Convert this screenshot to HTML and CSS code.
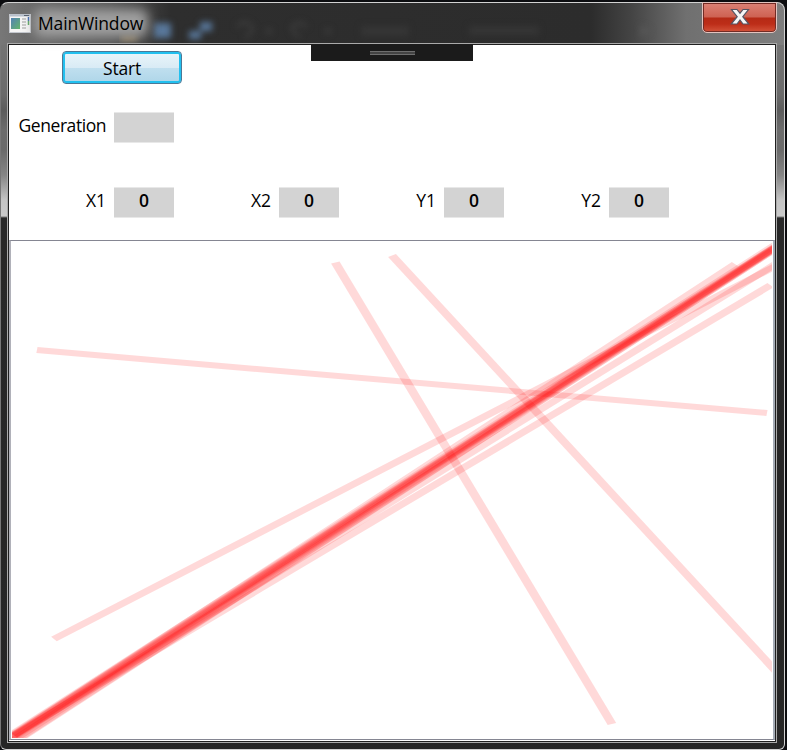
FILE: index.html
```html
<!DOCTYPE html>
<html lang="en">
<head>
<meta charset="utf-8">
<title>MainWindow</title>
<link rel="stylesheet" href="styles.css">
</head>
<body>
<div class="window">
  <header class="titlebar">
    <svg class="app-icon" width="22" height="19" viewBox="0 0 22 19">
      <defs><linearGradient id="pic" x2="1" y2="1"><stop stop-color="#5481b5"/><stop offset="1" stop-color="#63b56b"/></linearGradient></defs>
      <rect x=".5" y=".5" width="21" height="18" fill="#f5f5f5" stroke="#c3c7cd"/>
      <path d="M1 1.5h20" stroke="#b7bfcb" stroke-width="2"/>
      <path d="M15 1.5h5" stroke="#55606f"/>
      <rect x="2" y="4" width="9" height="11" fill="url(#pic)"/>
      <path d="M13 5h4M13 8h4M13 11h4M13 14h4" stroke="#c9c9c9" stroke-width="2"/>
      <path d="M19.5 3v4" stroke="#3d68b0" stroke-width="1.5"/><path d="M19.5 7v4" stroke="#5aa860" stroke-width="1.5"/>
    </svg>
    <h1 class="title">MainWindow</h1>
    <svg class="glass" width="640" height="40" viewBox="0 0 640 40">
      <g class="haze">
        <path d="M2 33h16v4h-16z" fill="#b79a68"/>
        <path d="M35 20h17v15h-17zM81 19h12v9h-12zM70 28h12v8h-12z" fill="#58779a"/>
        <g fill="none" stroke="#3e3e3e" stroke-width="3"><path d="M118 24q6-8 14-2q4 6-6 13M188 24q-8-8-15 0q0 6 8 10"/></g>
        <path d="M147 26h6v4h-6zM206 26h6v4h-6z" fill="#404040"/>
        <path d="M522 22l10 6l-10 6z" fill="#585858"/>
        <path d="M242 23h48v10h-48zM350 23h70v9h-70z" fill="#353535"/>
      </g>
    </svg>
    <button class="close" aria-label="Close">
      <svg width="20" height="18" viewBox="0 0 20 18"><path d="M1.5 1.5h5.5l3 3.8 3-3.8h5.5l-5.7 7.2 6 7.3h-5.8l-3-4-3 4H1.2l6-7.3z" fill="#f5f5f5" stroke="#545463" stroke-width="1.2"/></svg>
    </button>
  </header>
  <main class="client">
    <div class="debug-bar"><span class="grip"></span></div>
    <section class="controls">
      <button class="start">Start</button>
      <div class="row"><label class="name long">Generation</label><output class="value"></output></div>
      <div class="row fields">
        <label class="name">X1</label><output class="value">0</output>
        <label class="name">X2</label><output class="value">0</output>
        <label class="name">Y1</label><output class="value">0</output>
        <label class="name">Y2</label><output class="value">0</output>
      </div>
    </section>
    <section class="plot">
      <svg class="lines" viewBox="0 0 500 500" preserveAspectRatio="none">
        <path d="M16.4 108.9L496.7 172.4"/>
        <path d="M212.7 20.7L394.7 485.9"/>
        <path d="M250 13.6L506 438.4"/>
        <path d="M27.6 400.2L506 21.4"/>
        <path d="M1.3 497L499 43.6"/>
        <path d="M1.3 498L506 18.6"/>
        <path d="M1.3 497L475.7 22.2"/>
        <path d="M-3 499L506 -1"/>
        <path d="M-3 500L506 1"/>
        <path d="M-3 501L506 1"/>
        <path d="M-3 502L506 1.5"/>
        <path d="M-2 502.5L506 2"/>
        <path d="M-1 504L506 2"/>
        <path d="M0 505L506 3"/>
        <path d="M1 505L500 9"/>
      </svg>
    </section>
  </main>
</div>
</body>
</html>
```
FILE: styles.css
```css
* { box-sizing: border-box; }
body {
  margin: 0;
  width: 787px;
  height: 750px;
  padding-top: 2px;
  overflow: hidden;
  background: #0c0d10;
  font-family: "Open Sans", "Noto Sans", sans-serif;
  font-size: 17.5px;
  color: #000;
}
.window {
  width: 785px;
  height: 748px;
  padding: 0 7px 7px 6px;
  border: 1px solid #d2d2d2;
  border-left-color: #777;
  border-radius: 8px 8px 6px 6px;
  background:
    linear-gradient(#747474 0, #6a6a6a 50px, #5c5c5c 65px, #6c6c6c 85px, #6a6a6a 105px, #858585 130px, #c4c4c4 155px, #cacaca 171px, #282828 173px, #262626 100%) 0 42px / 100% 100% no-repeat,
    linear-gradient(90deg, #777 0, #6a6a6a 30px, #555 110px, #2e2e2e 170px, #2c2c2c 590px, #444 630px, #707070 685px, #7e7e7e 100%);
}
.titlebar {
  position: relative;
  display: flex;
  align-items: flex-start;
  height: 40px;
  padding-left: 2px;
}
.app-icon { margin-top: 11px; }
.title {
  position: relative;
  z-index: 1;
  margin: 7px 0 0 4px;
  padding: 0 3px;
  width: 112px;
  font-size: 17.5px;
  font-weight: 400;
  line-height: 26px;
  letter-spacing: -.15px;
}
.title::before {
  content: "";
  position: absolute;
  z-index: -1;
  inset: -1px -1px -1px -1px;
  border-radius: 8px;
  background: #a0a0a0;
  filter: blur(6px);
}
.glass { position: absolute; left: 112px; top: 0; }
.haze { filter: blur(3px); }
.close {
  display: flex;
  justify-content: center;
  width: 75px;
  height: 31px;
  margin: -1px 0 0 auto;
  padding: 5px 0 0;
  border: 1px solid #e3c3bf;
  border-radius: 0 0 5px 5px;
  background: linear-gradient(#dc8175 0, #ce6252 14px, #b52a16 15px, #bd2d18 21px, #d4543b 100%);
  box-shadow: inset 0 0 0 1px #732b24;
}
.client {
  position: relative;
  height: 700px;
  border: 1px solid #aaa;
  outline: 1px solid #202020;
  outline-offset: -2px;
  padding: 1px;
  background: #fff;
}
.debug-bar {
  position: absolute;
  left: 303px;
  top: 0;
  display: flex;
  justify-content: center;
  width: 162px;
  height: 17px;
  padding-top: 7px;
  background: #1b1b1b;
}
.grip {
  width: 45px;
  height: 4px;
  border: solid #6e6e6e;
  border-width: 1px 0;
  background: #444;
}
.controls { height: 195px; padding-top: 6px; }
.start {
  display: block;
  width: 120px;
  height: 33px;
  margin-left: 53px;
  padding: 0;
  border: 1px solid #4c7896;
  border-radius: 4px;
  background: linear-gradient(#eaf5fa 0, #d9ebf5 50%, #c0dfef 51%, #aed6e9 100%);
  box-shadow: inset 0 0 0 2px #22c0ef;
  font: inherit;
  letter-spacing: -.2px;
  line-height: 33px;
}
.row { display: flex; height: 31px; margin-top: 28px; align-items: center; }
.fields { margin-top: 44px; }
.name { width: 97px; margin-right: 8px; padding-bottom: 6px; text-align: right; line-height: 24px; letter-spacing: 0; }
.long { letter-spacing: -.45px; }
.value {
  width: 60px;
  height: 31px;
  background: #d3d3d3;
  border: solid #e8e8e8;
  border-width: 1px 0;
  text-align: center;
  font-weight: 600;
  line-height: 25px;
}
.plot {
  height: 500px;
  border: solid #858692;
  border-width: 1px 2px 1px 2px;
  border-left-color: #b0b1b9;
  border-right-color: #a4abb5;
  padding: 1px;
  overflow: hidden;
}
.lines { display: block; width: 760px; height: 496px; overflow: hidden; fill: none; stroke: #f00; stroke-opacity: .15; stroke-width: 6; }
```
